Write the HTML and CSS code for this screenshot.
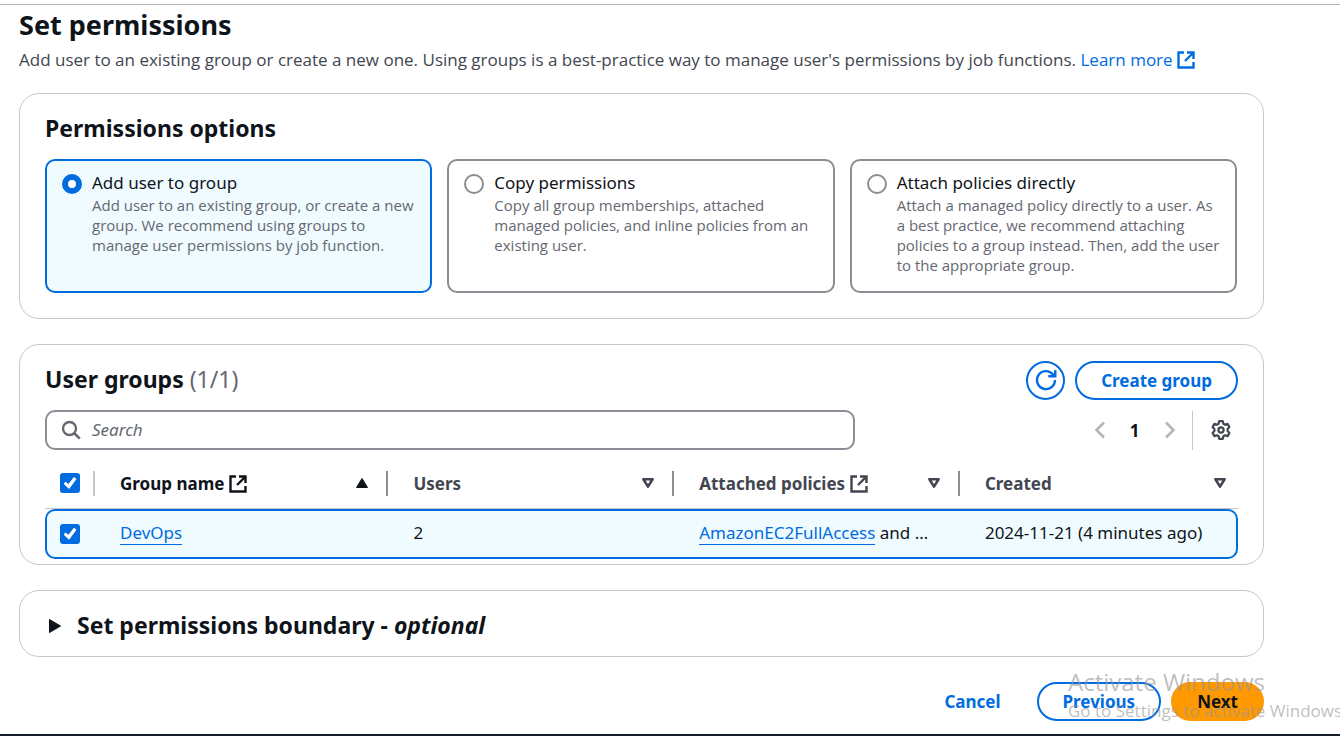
FILE: index.html
```html
<!DOCTYPE html>
<html lang="en">
<head>
<meta charset="utf-8">
<meta name="viewport" content="width=device-width, initial-scale=1">
<title>Set permissions</title>
<link rel="stylesheet" href="styles.css">
</head>
<body>
<svg class="sprite" aria-hidden="true">
  <symbol id="external" viewBox="0 0 18 18"><path d="M7 1.500H1.500v15h15V11M10 1.500h6.500V8M16 2 8 10" fill="none" stroke="currentColor" stroke-width="2.400"/></symbol>
  <symbol id="sort" viewBox="0 0 14 12"><path d="M2.400 2.200h9.200L7 9.600z" fill="none" stroke="currentColor" stroke-width="2.600" stroke-linejoin="round"/></symbol>
</svg>
<main class="page">
  <header class="intro">
    <h1 class="title">Set permissions</h1>
    <p class="lead">Add user to an existing group or create a new one. Using groups is a best-practice way to manage user's permissions by job functions. <a class="learn" href="#">Learn more <svg class="ext"><use href="#external"/></svg></a></p>
  </header>

  <section class="card options">
    <h2 class="heading">Permissions options</h2>
    <div class="tiles">
      <label class="tile tile-selected">
        <input class="radio" type="radio" name="method" checked>
        <span class="tile-text"><span class="tile-label">Add user to group</span><span class="tile-desc">Add user to an existing group, or create a new group. We recommend using groups to manage user permissions by job function.</span></span>
      </label>
      <label class="tile">
        <input class="radio" type="radio" name="method">
        <span class="tile-text"><span class="tile-label">Copy permissions</span><span class="tile-desc">Copy all group memberships, attached managed policies, and inline policies from an existing user.</span></span>
      </label>
      <label class="tile">
        <input class="radio" type="radio" name="method">
        <span class="tile-text"><span class="tile-label">Attach policies directly</span><span class="tile-desc">Attach a managed policy directly to a user. As a best practice, we recommend attaching policies to a group instead. Then, add the user to the appropriate group.</span></span>
      </label>
    </div>
  </section>

  <section class="card groups">
    <div class="bar">
      <h2 class="heading">User groups <span class="counter">(1/1)</span></h2>
      <div class="actions">
        <button class="btn btn-round" type="button" aria-label="Refresh"><svg class="refresh" viewBox="0 0 22 22"><path d="M20 11A9 9 0 1 1 17.800 5.200L20 7M20.300 1v6.300h-7" fill="none" stroke="currentColor" stroke-width="2.400"/></svg></button>
        <button class="btn" type="button">Create group</button>
      </div>
    </div>
    <div class="bar tools">
      <label class="search">
        <svg class="glass" viewBox="0 0 20 20"><circle cx="8.500" cy="8.500" r="6.500" fill="none" stroke="currentColor" stroke-width="2.400"/><path d="m13 13 5.800 5.600" stroke="currentColor" stroke-width="2.600"/></svg>
        <input class="search-input" type="text" placeholder="Search" aria-label="Search">
      </label>
      <div class="pager">
        <button class="icon-btn" type="button" aria-label="Previous page"><svg class="chevron" viewBox="0 0 12 18"><path d="M10 1.500 2.500 9l7.500 7.500" fill="none" stroke="currentColor" stroke-width="2.600"/></svg></button>
        <button class="icon-btn page-no" type="button">1</button>
        <button class="icon-btn" type="button" aria-label="Next page"><svg class="chevron" viewBox="0 0 12 18"><path d="M2 1.500 9.500 9 2 16.500" fill="none" stroke="currentColor" stroke-width="2.600"/></svg></button>
        <span class="rule"></span>
        <button class="icon-btn gear-btn" type="button" aria-label="Preferences"><svg class="gear" viewBox="0 0 20 20"><path d="M8.200 1.200h3.600l.6 2.500 1.700 1 2.500-.8 1.800 3.100-1.800 1.900v2.200l1.800 1.900-1.800 3.100-2.500-.8-1.700 1-.6 2.500H8.200l-.6-2.500-1.700-1-2.500.8-1.800-3.100 1.800-1.900V8.900L1.600 7l1.800-3.100 2.500.8 1.700-1z" fill="none" stroke="currentColor" stroke-width="2.200" stroke-linejoin="round"/><circle cx="10" cy="10" r="2.600" fill="none" stroke="currentColor" stroke-width="2.200"/></svg></button>
      </div>
    </div>
    <table class="table">
      <colgroup><col class="c-check"><col class="c-name"><col class="c-mid"><col class="c-mid"><col></colgroup>
      <thead>
        <tr>
          <th class="check" scope="col"><input class="tick" type="checkbox" checked aria-label="Select all groups"></th>
          <th class="active" scope="col"><div class="th"><span>Group name <svg class="ext"><use href="#external"/></svg></span><svg class="sort" viewBox="0 0 14 12"><path d="M7 1.500 12.500 10.500h-11z" fill="currentColor" stroke="currentColor" stroke-linejoin="round"/></svg></div></th>
          <th scope="col"><div class="th"><span>Users</span><svg class="sort"><use href="#sort"/></svg></div></th>
          <th scope="col"><div class="th"><span>Attached policies <svg class="ext"><use href="#external"/></svg></span><svg class="sort"><use href="#sort"/></svg></div></th>
          <th scope="col"><div class="th"><span>Created</span><svg class="sort"><use href="#sort"/></svg></div></th>
        </tr>
      </thead>
      <tbody>
        <tr>
          <td class="check"><input class="tick" type="checkbox" checked aria-label="Select DevOps"></td>
          <td><a class="link" href="#">DevOps</a></td>
          <td>2</td>
          <td><a class="link" href="#">AmazonEC2FullAccess</a> and …</td>
          <td>2024-11-21 (4 minutes ago)</td>
        </tr>
      </tbody>
    </table>
  </section>

  <section class="card">
    <button class="expand" type="button"><svg class="caret" viewBox="0 0 14 16"><path d="M1.500 1.500v13L12.500 8z" fill="currentColor" stroke="currentColor" stroke-linejoin="round"/></svg><span>Set permissions boundary - <em>optional</em></span></button>
  </section>

  <div class="footer">
    <button class="btn btn-plain" type="button">Cancel</button>
    <button class="btn" type="button">Previous</button>
    <button class="btn btn-primary" type="button">Next</button>
  </div>
</main>
<div class="watermark">
  <div class="wm-title">Activate Windows</div>
  <div class="wm-text">Go to Settings to activate Windows.</div>
</div>
<div class="taskbar"></div>
</body>
</html>
```
FILE: styles.css
```css
* { box-sizing: border-box; }

body {
  margin: 0;
  padding-top: 4px;
  min-height: 100vh;
  display: flex;
  flex-direction: column;
  position: relative;
  overflow: hidden;
  background: #fff;
  color: #0f141a;
  font: 17px/25px "Noto Sans", "Open Sans", sans-serif;
}

button, input { font: inherit; color: inherit; }
a { color: #006ce0; text-decoration: none; }
svg { flex: none; }
.sprite { display: none; }

.page {
  flex: 1;
  padding: 0 76px 0 19px;
  border-top: 1px solid #b4b4bb;
}

.title { margin: 0; font-size: 27px; line-height: 40px; font-weight: 700; }
.lead {
  margin: 2px 0 0;
  color: #424650;
  font-family: "Open Sans", sans-serif;
  line-height: 26px;
  white-space: nowrap;
}
.intro { margin-bottom: 20px; }

.ext { width: 18px; height: 18px; vertical-align: -3px; }

.card {
  border: 1px solid #c6c6cd;
  border-radius: 20px;
  margin-bottom: 25px;
}
.heading { margin: 0; font-size: 23px; line-height: 30px; font-weight: 700; }

.options { padding: 19px 26px 25px 25px; }
.tiles {
  display: grid;
  grid-template-columns: repeat(3, 1fr);
  gap: 15px;
  margin-top: 16px;
}
.tile {
  display: flex;
  gap: 10px;
  padding: 9px 15px 15px;
  min-height: 134px;
  border: 2px solid #8c8c94;
  border-radius: 10px;
}
.tile-selected { border-color: #006ce0; background: #f0fbff; }
.tile-label { display: block; line-height: 25px; }
.tile-desc {
  display: block;
  color: #656871;
  font-family: "Open Sans", sans-serif;
  font-size: 15px;
  line-height: 20px;
}
.radio {
  appearance: none;
  flex: none;
  width: 20px;
  height: 20px;
  margin: 4px 0 0;
  border: 2px solid #8c8c94;
  border-radius: 50%;
  background: #fff;
}
.radio:checked { border: 6px solid #006ce0; }

.groups { padding: 16px 25px 5px; }
.bar { display: flex; align-items: center; justify-content: space-between; }
.bar .heading { padding-bottom: 3px; }
.counter { font-weight: 400; color: #656871; }
.actions { display: flex; gap: 10px; }

.btn {
  height: 39px;
  padding: 0 24px 1px;
  border: 2px solid #006ce0;
  border-radius: 20px;
  background: #fff;
  color: #006ce0;
  font-weight: 700;
}
.btn-round { width: 39px; padding: 0 0 2px; display: grid; place-items: center; }
.btn-plain { border-color: transparent; }
.btn-primary { background: #f90; border-color: #f90; color: #0f141a; }
.refresh { width: 22px; height: 22px; }

.tools { margin-top: 10px; }
.search {
  flex: 0 0 810px;
  flex: 0 0 67.9%;
  height: 40px;
  display: flex;
  align-items: center;
  gap: 11px;
  padding: 0 14px;
  border: 2px solid #8c8c94;
  border-radius: 10px;
}
.glass { width: 20px; height: 20px; color: #656871; }
.search-input { flex: 1; min-width: 0; border: 0; padding: 0 0 2px; outline: 0; background: none; }
.search-input::placeholder { color: #656871; font-style: italic; opacity: 1; }

.pager { display: flex; align-items: center; }
.icon-btn {
  width: 35px;
  height: 35px;
  padding: 0;
  border: 0;
  background: none;
  color: #b4b4bb;
  display: grid;
  place-items: center;
}
.page-no { color: #0f141a; font-weight: 700; }
.chevron { width: 12px; height: 18px; }
.rule { width: 1px; height: 39px; margin: 0 10px 0 5px; background: #c6c6cd; }
.gear-btn { color: #424650; }
.gear { width: 20px; height: 20px; }

.table {
  width: 100%;
  margin-top: 9px;
  table-layout: fixed;
  border-spacing: 0;
}
.c-check { width: 50px; }
.c-name { width: 24.6%; }
.c-mid { width: 23.95%; }

th {
  height: 50px;
  padding: 0 0 1px;
  text-align: left;
  border-bottom: 1px solid #c6c6cd;
  color: #424650;
}
.active { color: #0f141a; }
.th {
  display: flex;
  align-items: center;
  justify-content: space-between;
  height: 25px;
  padding: 0 17px 0 25px;
  border-right: 2px solid #8c8c94;
}
th:last-child .th { border-right: 0; padding-right: 11px; }
.sort { width: 14px; height: 12px; }

td {
  height: 50px;
  padding: 0 0 4px 25px;
  background: #f0fbff;
  border: solid #006ce0;
  border-width: 2px 0;
  white-space: nowrap;
}
td:first-child { border-left-width: 2px; border-radius: 10px 0 0 10px; }
td:last-child { border-right-width: 2px; border-radius: 0 10px 10px 0; }
.check { line-height: 20px; }
td.check { padding: 0 0 2px 13px; }
th.check { padding: 0 0 1px; }
th.check::after {
  content: "";
  display: inline-block;
  vertical-align: middle;
  width: 2px;
  height: 25px;
  margin-left: 13px;
  background: #c6c6cd;
}
.tick {
  appearance: none;
  width: 20px;
  height: 20px;
  margin: 0;
  vertical-align: middle;
  border-radius: 3px;
  background: #006ce0;
  display: inline-grid;
  place-items: center;
}
th .tick { margin-left: 15px; }
.tick::before {
  content: "";
  width: 13px;
  height: 12px;
  background: #fff;
  clip-path: polygon(0 57%, 16% 39%, 38% 59%, 80% 0, 100% 16%, 43% 100%);
}
.link { border-bottom: 1px solid #006ce0; }

.expand {
  display: flex;
  align-items: center;
  gap: 15px;
  width: 100%;
  height: 65px;
  padding: 4px 28px 0;
  border: 0;
  border-radius: 20px;
  background: none;
  font-size: 23px;
  font-weight: 700;
  text-align: left;
}
.caret { width: 14px; height: 16px; }

.footer { display: flex; justify-content: flex-end; gap: 10px; }

.watermark {
  position: absolute;
  left: 1068px;
  top: 667px;
  width: 272px;
  overflow: hidden;
  white-space: nowrap;
  color: rgba(150, 150, 150, .62);
  pointer-events: none;
  font-family: "Open Sans", sans-serif;
}
.wm-title { font-size: 24px; line-height: 30px; }
.wm-text { font-size: 17px; line-height: 28px; }

.taskbar { height: 2px; background: #161d2b; }
```
